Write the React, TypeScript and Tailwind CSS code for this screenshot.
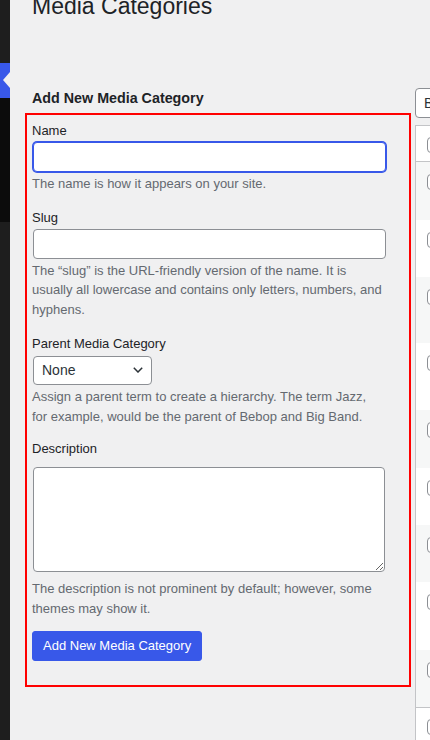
import { ChevronDown } from 'lucide-react'

const rowHeights = [58, 57, 66, 67, 58, 57, 57, 68, 57]

function Checkbox() {
  return <span className="block h-4 w-4 rounded-[4px] border border-[#8c8f94] bg-white" />
}

function Sidebar() {
  return (
    <div className="flex w-[10px] shrink-0 flex-col">
      <div className="h-[63px] bg-[#1e1e1e]" />
      <div className="relative h-[35px] bg-[#3858e9]">
        <span className="absolute right-0 top-[9px] h-0 w-0 border-y-[8.5px] border-r-[7px] border-y-transparent border-r-[#f0f0f1]" />
      </div>
      <div className="h-[124px] bg-[#0c0c0c]" />
      <div className="flex-1 bg-[#1e1e1e]" />
    </div>
  )
}

function TermForm() {
  const label = 'block text-[13px] leading-[19.5px] text-[#1d2327]'
  const desc = 'w-[351px] text-[13px] leading-[19.5px] text-[#646970]'
  const input =
    'ml-px block h-[30px] w-[95%] rounded-[4px] border border-[#8c8f94] bg-white px-2 text-[14px] outline-none'

  return (
    <div className="-ml-[7px] mt-[5px] w-[386px] border-2 border-[#ff0000] px-[5px] pb-[24px] pt-[6px]">
      <label className={label}>Name</label>
      <input
        className={`${input} mt-[1.5px] border-[#3858e9] shadow-[0_0_0_1px_#3858e9]`}
        type="text"
      />
      <p className={`${desc} mt-[1.5px]`}>The name is how it appears on your site.</p>

      <label className={`${label} mt-[14.5px]`}>Slug</label>
      <input className={`${input} mt-[2px]`} type="text" />
      <p className={`${desc} mt-[1.5px]`}>
        The “slug” is the URL-friendly version of the name. It is usually all lowercase and
        contains only letters, numbers, and hyphens.
      </p>

      <label className={`${label} mt-[14.5px]`}>Parent Media Category</label>
      <div className="relative ml-px mt-[2.5px] w-[119px]">
        <select className="block h-[29px] w-full appearance-none rounded-[4px] border border-[#8c8f94] bg-white pl-2 text-[14px] text-[#2c3338] outline-none">
          <option>None</option>
        </select>
        <svg
          className="pointer-events-none absolute right-[9px] top-[11.5px]"
          width="10"
          height="6"
          viewBox="0 0 10 6"
          fill="none"
        >
          <path d="M0.8 0.8 L5 5 L9.2 0.8" stroke="#2c3338" strokeWidth="1.5" />
        </svg>
      </div>
      <p className={`${desc} mt-[2.5px]`}>
        Assign a parent term to create a hierarchy. The term Jazz, for example, would be the
        parent of Bebop and Big Band.
      </p>

      <label className={`${label} mt-[13px]`}>Description</label>
      <textarea className="ml-px mt-[8px] block h-[105px] w-[352px] rounded-[4px] border border-[#8c8f94] bg-white outline-none" />
      <p className={`${desc} mt-[7.5px]`}>
        The description is not prominent by default; however, some themes may show it.
      </p>

      <button className="mt-[13px] h-[30px] rounded-[3px] border border-[#3858e9] bg-[#3858e9] px-[10px] text-[13px] text-white">
        Add New Media Category
      </button>
    </div>
  )
}

function TermsTable() {
  return (
    <div className="w-[400px] shrink-0">
      <div className="flex h-[30px] w-[160px] items-center rounded-[4px] border border-[#8c8f94] bg-white pl-2 text-[14px] text-[#2c3338]">
        Bulk actions
        <ChevronDown className="ml-auto mr-2 h-4 w-4" />
      </div>
      <div className="mt-[7px] border-l border-t border-[#c3c4c7] bg-white">
        <div className="h-[36px] border-b border-[#c3c4c7] pl-[11px] pt-[11px]">
          <Checkbox />
        </div>
        {rowHeights.map((h, i) => (
          <div
            key={i}
            className={i % 2 === 0 ? 'bg-[#f6f7f7] pl-[11px] pt-[12px]' : 'bg-white pl-[11px] pt-[12px]'}
            style={{ height: h }}
          >
            <Checkbox />
          </div>
        ))}
        <div className="h-[40px] border-t border-[#c3c4c7] pl-[11px] pt-[11px]">
          <Checkbox />
        </div>
      </div>
    </div>
  )
}

export default function App() {
  return (
    <div className="flex h-[740px] w-[430px] overflow-hidden bg-[#f0f0f1] font-['Liberation_Sans',Arial,sans-serif]">
      <Sidebar />
      <div className="min-w-0 flex-1 pl-[22px]">
        <h1 className="-mt-[9px] whitespace-nowrap text-[23px] font-normal leading-[30px] text-[#1d2327]">
          Media Categories
        </h1>
        <div className="mt-[67px] flex items-start gap-[11px]">
          <div className="w-[372px] shrink-0">
            <h2 className="text-[14.3px] font-bold leading-[20px] text-[#1d2327]">
              Add New Media Category
            </h2>
            <TermForm />
          </div>
          <TermsTable />
        </div>
      </div>
    </div>
  )
}
